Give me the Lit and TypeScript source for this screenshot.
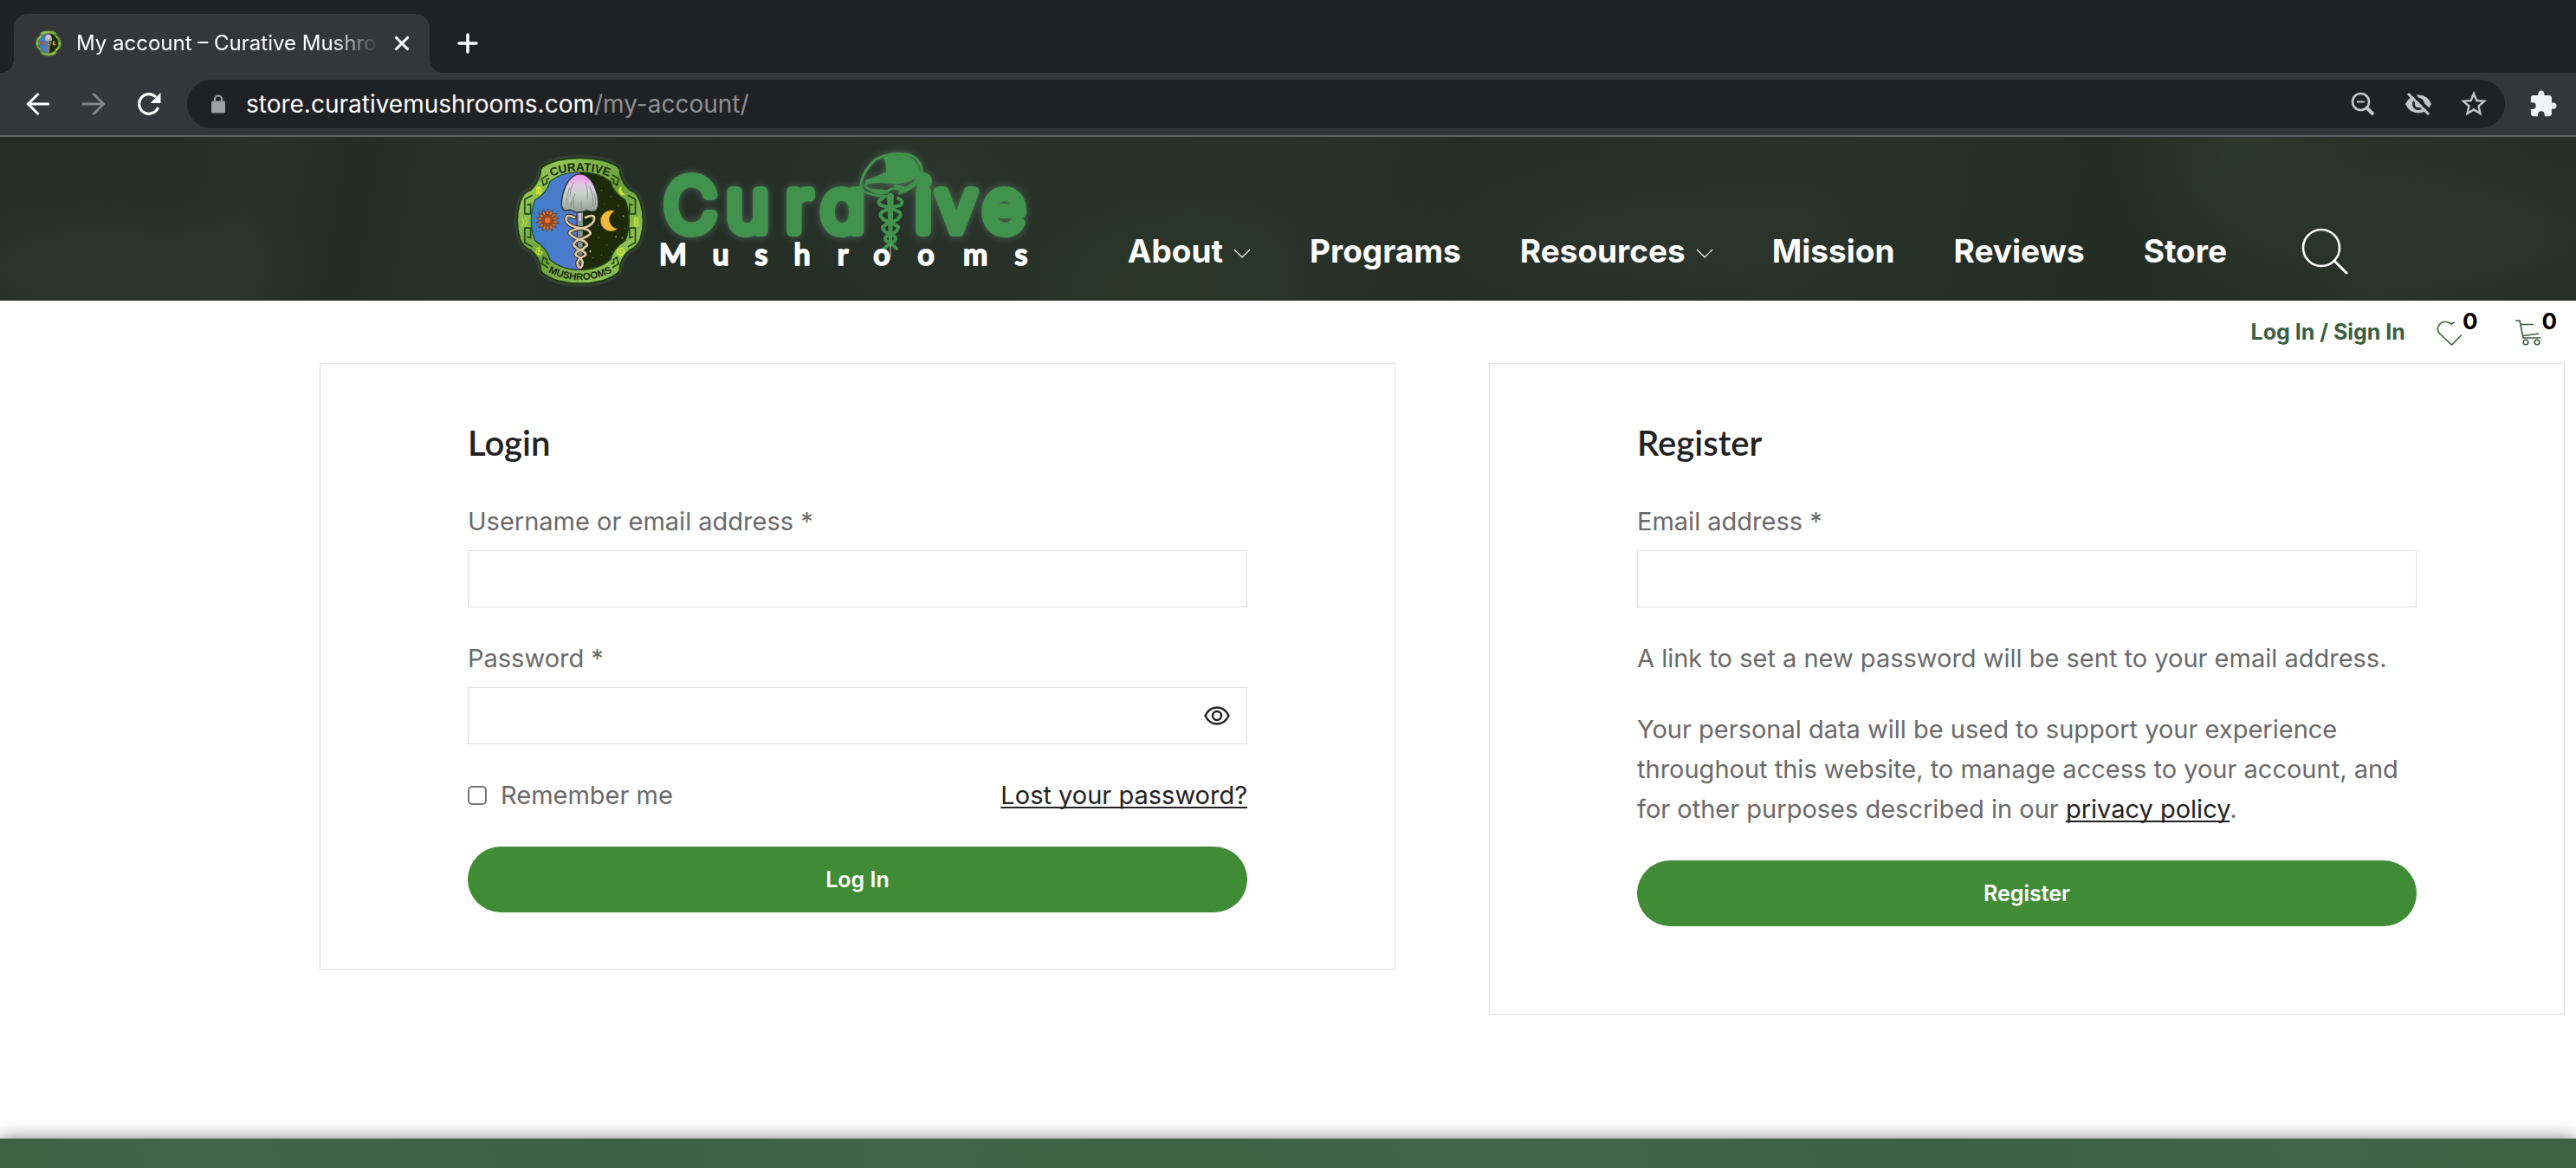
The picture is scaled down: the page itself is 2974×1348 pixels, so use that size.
import { LitElement, html, css, svg } from "lit";
import { customElement, property, state } from "lit/decorators.js";

interface NavItem {
  label: string;
  menu?: boolean;
}

const NAV: NavItem[] = [
  { label: "About", menu: true },
  { label: "Programs" },
  { label: "Resources", menu: true },
  { label: "Mission" },
  { label: "Reviews" },
  { label: "Store" },
];

/* Round seal: day half, night half, mushroom staff in the middle. */
@customElement("brand-seal")
export class BrandSeal extends LitElement {
  @property({ type: Boolean }) lettered = false;

  static styles = css`
    :host { display: block; }
    .seal { display: block; width: 100%; height: 100%; overflow: visible; }
    .glow { filter: drop-shadow(0 0 6px rgba(190, 220, 190, 0.35)); }
    .ring-text { font: 700 40px "Liberation Sans", sans-serif; fill: #16290a; }
    .ring-text.long { font-size: 34px; }
  `;

  render() {
    const ring =
      "M190 77Q267 60 345 77Q385 88 402 105Q404 148 437 178Q463 184 474 222Q492 284 474 345Q463 375 437 384Q404 410 402 456Q385 474 345 488Q267 508 190 488Q150 474 133 456Q131 410 98 384Q72 375 61 345Q43 284 61 222Q72 184 98 178Q131 148 133 105Q150 88 190 77Z";
    const inner =
      "M267 118Q330 118 370 150Q380 190 421 214Q446 284 421 350Q380 375 370 415Q330 450 267 450Q205 450 165 415Q155 375 114 350Q89 284 114 214Q155 190 165 150Q205 118 267 118Z";
    const rays = Array.from({ length: 14 }, (_, i) => i * (360 / 14));
    const stars = [[303,152],[340,180],[372,200],[398,232],[415,268],[350,225],[330,340],[358,366],[390,338],[312,410],[340,400],[376,390],[302,388],[420,310],[385,160],[318,240],[412,342],[330,300]];
    return html`
      <svg class="seal" viewBox="46 62 444 444" role="img" aria-label="Curative Mushrooms seal">
        <defs>
          <linearGradient id="rim" x1="0" y1="0" x2="1" y2="1">
            <stop offset="0" stop-color="#7fb446" /><stop offset=".2" stop-color="#92c455" />
            <stop offset=".5" stop-color="#6a9f3c" /><stop offset=".8" stop-color="#90c254" />
            <stop offset="1" stop-color="#659c3b" />
          </linearGradient>
          <linearGradient id="day" x1="0" y1="0" x2="1" y2="0">
            <stop offset="0" stop-color="#3d7fc8" /><stop offset=".55" stop-color="#5478cf" />
            <stop offset="1" stop-color="#9a55e0" />
          </linearGradient>
          <linearGradient id="cap" x1="0" y1="0" x2="0" y2="1">
            <stop offset="0" stop-color="#f08df0" /><stop offset=".28" stop-color="#e3c6e4" />
            <stop offset=".5" stop-color="#c9d3cd" /><stop offset="1" stop-color="#8f9c94" />
          </linearGradient>
          <clipPath id="left"><rect x="40" y="60" width="227" height="450" /></clipPath>
          <path id="arc-top" d="M152 140Q267 86 383 140" />
          <path id="arc-bottom" d="M152 456Q267 516 383 456" />
        </defs>
        <path class="glow" d=${ring} fill="url(#rim)" stroke="#1d3a0e" stroke-width="6" />
        <path d=${inner} fill="#1d2b0b" stroke="#1b3a12" stroke-width="6" />
        <path d=${inner} fill="url(#day)" clip-path="url(#left)" />
        <g fill="none" stroke="#24480f" stroke-width="5">
          <path d="M158 126l-22 14 6 22 12-8 -2-10 10-6M377 126l22 14-6 22-12-8 2-10-10-6" />
          <path d="M158 444l-22-14 6-22 12 8-2 10 10 6M377 444l22-14-6-22-12 8 2 10-10 6" />
          <path d="M104 196l-26 14v50h20v-34l-12 4M430 196l26 14v50h-20v-34l12 4" />
          <path d="M104 372l-26-14v-50h20v34l-12-4M430 372l26-14v-50h-20v34l12-4" />
        </g>
        <g fill="none" stroke="#d8ee2c" stroke-width="4">
          <rect x="119" y="170" width="14" height="22" rx="6" /><path d="M126 172v18" />
          <circle cx="406" cy="389" r="12" /><path d="M394 389h24M406 377v24M398 380l16 18" stroke-width="2" />
          <path d="M116 377h16M126 372v30M114 390q12-12 24 2q-8 16-24-2" stroke-width="3" />
          <path d="M70 276q8 10 0 26M80 272q10 14 0 30" stroke-width="3" />
          <path d="M454 274h10v28h-10zM454 288h10" stroke-width="3" />
        </g>
        <path d="M410 166a15 15 0 1 0 12 27a18 18 0 0 1-12-27z" fill="#d8ee2c" />
        ${stars.map(([x, y], i) => svg`<circle cx=${x} cy=${y} r=${i % 4 ? 1.6 : 3} fill="#d7dfcf" opacity=${i % 3 ? 0.6 : 1} />`)}
        ${rays.map((a) => svg`<path d="M150 262Q148 250 158 243Q157 252 162 262Z" fill="#d07a33" stroke="#5a2a12" stroke-width="2" transform="rotate(${a} 156 282)" />`)}
        <circle cx="156" cy="282" r="20" fill="#9c4a24" /><circle cx="156" cy="282" r="9" fill="#f0703a" />
        <path d="M386 250A36 36 0 1 0 396 311A32 32 0 0 1 386 250Z" fill="#f0b83c" stroke="#6b4a10" stroke-width="2" />
        <path d="M258 118V450" stroke="#c24cf0" stroke-width="5" />
        <path d="M256 250h23l-3 165-9 32-8-32z" fill="#81988d" stroke="#1f2a22" stroke-width="3" />
        <path d="M262 256v28h9v-28z" fill="#d9b6d4" />
        <g fill="none" stroke-linecap="round">
          ${["#2d2416|13", "#decba6|8"].map((s) => {
            const [c, w] = s.split("|");
            return svg`<g stroke=${c} stroke-width=${w}>
              <path d="M248 272Q214 256 220 284Q230 304 268 308Q306 314 302 328Q290 340 268 346Q242 356 246 368Q256 380 270 384Q292 394 284 402Q262 412 258 426Q258 440 268 444" />
              <path d="M286 272Q322 256 314 284Q304 304 268 310Q226 316 232 328Q244 342 268 348Q294 356 290 368Q280 380 266 384Q246 394 254 402Q274 412 276 426Q276 436 270 442" />
            </g>`;
          })}
        </g>
        <path d="M268 124Q240 122 220 160Q202 200 204 232Q206 254 232 246Q262 262 290 248Q322 260 329 236Q332 200 314 160Q294 124 268 124Z" fill="url(#cap)" stroke="#28302b" stroke-width="4" />
        <path d="M232 170q-14 30-12 62M246 150q-12 20-14 50M250 190q-10 20-4 50M286 150q10 30 6 60M300 166q14 30 10 70M314 188q8 20 6 44M240 214q-6 10-4 24M272 215q-4 16 0 28" fill="none" stroke="#6f7b75" stroke-width="2" />
        ${this.lettered
          ? svg`<text class="ring-text" text-anchor="middle"><textPath href="#arc-top" startOffset="50%">CURATIVE</textPath></text>
                <text class="ring-text long" text-anchor="middle"><textPath href="#arc-bottom" startOffset="50%">MUSHROOMS</textPath></text>`
          : ""}
      </svg>
    `;
  }
}

/* Two-line brand lettering; a mushroom caduceus stands between the letters. */
@customElement("brand-wordmark")
export class BrandWordmark extends LitElement {
  static styles = css`
    :host { display: block; }
    .mark { display: block; width: 100%; height: 100%; overflow: visible; }
    .glow { filter: drop-shadow(0 0 4px rgba(140, 190, 150, 0.4)); }
    .big {
      font: 300 84px Inter, sans-serif; font-feature-settings: "cv11";
      fill: #41924c; stroke: #41924c; stroke-width: 12px; text-anchor: middle;
      stroke-linejoin: round; stroke-linecap: round;
    }
    .small {
      font: 600 34px Lato, sans-serif; fill: #fff; stroke: #fff; text-anchor: middle;
      stroke-width: 2px; stroke-linejoin: round;
    }
    .green { fill: #41924c; }
    .line { fill: none; stroke: #41924c; stroke-linecap: round; }
  `;

  render() {
    return html`
      <svg class="mark" viewBox="0 0 440 150" role="img" aria-label="Curative Mushrooms">
        <g class="glow">
          <text class="big" y="97" x="42 108 167 218">Cura</text>
          <text class="big" y="97" x="311 349 404">ive</text>
          <path class="line" stroke-width="3" d="M272 57Q240 56 239 44Q240 28 256 14Q276 4 296 9Q314 18 307 36Q300 48 283 53" />
          <path class="green" d="M244 38Q262 32 268 28Q268 14 264 12Q274 7 290 9Q308 16 307 30Q296 44 272 42Q254 40 244 44Z" />
          <path class="line" stroke-width="3" d="M243 44Q256 56 268 52Q276 44 286 50L302 40M250 49L270 51M278 44L292 48" />
        </g>
        <path class="green" d="M269 55Q273 50 277 55L275 108L273 117L271 108Z" />
        <g class="line" stroke-width="4">
          <path d="M264 59Q256 63 262 67Q274 70 282 74Q288 78 280 84Q268 88 264 92Q264 97 272 100Q282 103 278 108Q270 112 266 117" />
          <path d="M282 59Q290 63 284 67Q272 70 264 74Q258 78 266 84Q278 88 282 92Q282 97 274 100Q264 103 268 108Q276 112 280 117" />
        </g>
        <path d="M273 112V127" stroke="#9dc7a2" stroke-width="1" />
        <text class="small" y="136" x="22 77 124 171 218 263 314 371 424">Mushrooms</text>
      </svg>
    `;
  }
}

@customElement("browser-bar")
export class BrowserBar extends LitElement {
  static styles = css`
    :host { display: block; background: #202124; color: #fff; font-family: Inter, sans-serif; }
    button { border: 0; padding: 0; background: none; color: inherit; display: grid; place-items: center; }
    svg { display: block; }
    .tabs { display: flex; align-items: flex-end; height: 84px; padding-left: 16px; gap: 28px; }
    .tab {
      position: relative; display: flex; align-items: center; box-sizing: border-box;
      width: 480px; height: 68px; padding: 0 22px 0 25px; gap: 17px;
      background: #35363a; border-radius: 16px 16px 0 0;
    }
    .tab::before, .tab::after {
      content: ""; position: absolute; bottom: 0; width: 16px; height: 16px;
    }
    .tab::before { right: 100%; background: radial-gradient(circle at 0 0, transparent 16px, #35363a 16px); }
    .tab::after { left: 100%; background: radial-gradient(circle at 100% 0, transparent 16px, #35363a 16px); }
    .favicon { width: 30px; height: 30px; flex: none; }
    .title {
      flex: 1; min-width: 0; overflow: hidden; white-space: nowrap; font-size: 24px; line-height: 32px;
      mask-image: linear-gradient(to right, #000 84%, transparent);
    }
    .close { width: 20px; height: 20px; }
    .new { width: 32px; height: 68px; }
    .tools {
      display: flex; align-items: center; height: 72px; background: #35363a;
      border-bottom: 2px solid #5f6165; padding: 0 20px 0 26px; gap: 28px;
    }
    .nav-btn { width: 36px; height: 36px; }
    .dim { color: #85868a; }
    .omni {
      flex: 1; display: flex; align-items: center; box-sizing: border-box; height: 56px;
      padding: 0 18px 0 28px; margin: 0 -2px; border-radius: 28px; background: #202124; gap: 28px;
    }
    .url { flex: 1; font-size: 28px; line-height: 36px; color: #8e8f92; margin-left: -4px; }
    .host { color: #fff; }
    .lock { color: #9aa0a6; }
    .omni button { color: #c4c5c7; width: 36px; height: 36px; }
  `;

  render() {
    return html`
      <div class="tabs">
        <div class="tab">
          <brand-seal class="favicon"></brand-seal>
          <span class="title">My account – Curative Mushrooms</span>
          <button class="close" aria-label="Close tab">
            <svg width="18" height="18" viewBox="0 0 18 18" stroke="currentColor" stroke-width="3"><path d="M1.5 1.5l15 15M16.500 1.5l-15 15" /></svg>
          </button>
        </div>
        <button class="new" aria-label="New tab">
          <svg width="24" height="24" viewBox="0 0 24 24" stroke="currentColor" stroke-width="3.500" stroke-linecap="round"><path d="M12 2v20M2 12h20" /></svg>
        </button>
      </div>
      <div class="tools">
        <button class="nav-btn" aria-label="Back">
          <svg width="28" height="28" viewBox="0 0 28 28" fill="none" stroke="currentColor" stroke-width="3"><path d="M27 14H3M14.500 2L2.500 14l12 12" /></svg>
        </button>
        <button class="nav-btn dim" aria-label="Forward">
          <svg width="28" height="28" viewBox="0 0 28 28" fill="none" stroke="currentColor" stroke-width="3"><path d="M1 14h24M13.500 2l12 12-12 12" /></svg>
        </button>
        <button class="nav-btn" aria-label="Reload">
          <svg width="28" height="28" viewBox="0 0 28 28" fill="none" stroke="currentColor" stroke-width="3.200"><path d="M24.500 18A11.300 11.300 0 1 1 22 6" /><path d="M27.500 1v12H15.500z" fill="currentColor" stroke="none" /></svg>
        </button>
        <div class="omni">
          <svg class="lock" width="16" height="22" viewBox="0 0 16 22"><rect y="7.500" width="16" height="14" rx="2" fill="currentColor" /><path d="M4 9V5.500a4 4 0 0 1 8 0V9" fill="none" stroke="currentColor" stroke-width="2.200" /></svg>
          <span class="url"><span class="host">store.curativemushrooms.com</span>/my-account/</span>
          <button aria-label="Zoom">
            <svg width="28" height="28" viewBox="0 0 28 28" fill="none" stroke="currentColor"><circle cx="11.500" cy="11.500" r="9.500" stroke-width="2.600" /><path d="M18 18l8 8" stroke-width="4" /><path d="M7 11.500h9" stroke-width="2" /></svg>
          </button>
          <button aria-label="Third-party cookies blocked">
            <svg width="32" height="32" viewBox="0 0 32 32"><path d="M1 16Q6 5.500 16 5.500T31 16Q26 26.500 16 26.500T1 16Z" fill="currentColor" /><circle cx="16" cy="16" r="7" fill="#202124" /><circle cx="16" cy="16" r="4.200" fill="currentColor" /><path d="M6 1l25 25" stroke="#202124" stroke-width="4" /><path d="M4 4l24 24" stroke="currentColor" stroke-width="3" /></svg>
          </button>
          <button aria-label="Bookmark">
            <svg width="36" height="36" viewBox="0 0 24 24" fill="currentColor"><path d="M22 9.240l-7.190-.62L12 2 9.190 8.630 2 9.240l5.460 4.730L5.820 21 12 17.270 18.180 21l-1.630-7.030L22 9.240zM12 15.400l-3.760 2.270 1-4.280-3.320-2.880 4.380-.38L12 6.100l1.710 4.040 4.380.38-3.320 2.880 1 4.280L12 15.400z" /></svg>
          </button>
        </div>
        <button class="nav-btn" aria-label="Extensions">
          <svg width="34" height="34" viewBox="0 0 24 24" fill="#f1f3f4"><path d="M20.500 11H19V7c0-1.100-.9-2-2-2h-4V3.500C13 2.120 11.880 1 10.500 1S8 2.120 8 3.500V5H4c-1.100 0-1.990.9-1.990 2v3.800H3.500c1.490 0 2.700 1.210 2.700 2.700s-1.210 2.700-2.700 2.700H2V20c0 1.100.9 2 2 2h3.800v-1.500c0-1.490 1.210-2.700 2.700-2.700s2.700 1.210 2.700 2.700V22H17c1.100 0 2-.9 2-2v-4h1.500c1.380 0 2.500-1.120 2.500-2.500S21.880 11 20.500 11z" /></svg>
        </button>
      </div>
    `;
  }
}

@customElement("site-header")
export class SiteHeader extends LitElement {
  static styles = css`
    :host { display: block; font-family: Inter, sans-serif; }
    a { text-decoration: none; }
    svg { display: block; }
    .banner {
      display: flex; box-sizing: border-box; height: 189px; padding-left: 20%;
      background-color: #252f27;
      background-image:
        radial-gradient(ellipse 260px 90px at 4% 80%, rgba(62, 76, 60, 0.3), transparent),
        radial-gradient(ellipse 180px 120px at 36% 30%, rgba(48, 60, 50, 0.4), transparent),
        radial-gradient(ellipse 200px 120px at 45% 90%, rgba(48, 62, 40, 0.5), transparent),
        radial-gradient(ellipse 320px 90px at 63% 60%, rgba(52, 64, 56, 0.3), transparent),
        radial-gradient(ellipse 160px 160px at 87% 10%, rgba(54, 66, 56, 0.4), transparent),
        radial-gradient(ellipse 300px 100px at 96% 60%, rgba(52, 62, 46, 0.4), transparent),
        linear-gradient(100deg, #252e26 0 7%, #29322a 10%, #242d25 14%, #28312a 18%, #242d26 24%, #28322a 50%, #242d26 56%, #28322a 70%, #232d25 82%, #29322a 92%, #252e26);
    }
    .brand { display: flex; flex: none; align-items: flex-start; gap: 10px; padding-top: 12px; }
    .seal { width: 150px; height: 150px; padding-top: 10px; }
    .wordmark { width: 440px; height: 150px; }
    .nav { display: flex; align-items: center; gap: 68px; padding: 102px 0 0 107px; height: 60px; }
    .item { display: flex; align-items: center; gap: 12px; color: #fff; font-size: 37px; font-weight: 700; line-height: 48px; }
    .item svg { padding-top: 6px; }
    .search { border: 0; padding: 0; margin-left: 18px; background: none; color: #fff; }
    .account { display: flex; align-items: center; justify-content: flex-end; height: 72px; padding-right: 22px; gap: 36px; }
    .login { color: #3a5f41; font-size: 25px; font-weight: 700; line-height: 36px; }
    .counters { display: flex; gap: 44px; padding-bottom: 6px; }
    .counter { display: flex; align-items: flex-start; color: #3a5f41; }
    .counter svg { padding-top: 8px; }
    .count { color: #000; font-size: 26px; font-weight: 700; line-height: 20px; }
  `;

  render() {
    return html`
      <header class="banner">
        <a class="brand" href="#" aria-label="Curative Mushrooms home">
          <brand-seal class="seal" lettered></brand-seal>
          <brand-wordmark class="wordmark"></brand-wordmark>
        </a>
        <nav class="nav">
          ${NAV.map(
            (n) => html`<a class="item" href="#">${n.label}${n.menu
              ? html`<svg width="20" height="12" viewBox="0 0 20 12" fill="none" stroke="#fff" stroke-width="1.200"><path d="M1 1l9 9 9-9" /></svg>`
              : ""}</a>`
          )}
          <button class="search" aria-label="Search">
            <svg width="54" height="54" viewBox="0 0 54 54" fill="none" stroke="currentColor" stroke-width="2.600"><circle cx="23" cy="23" r="21" /><path d="M38 38l14 14" stroke-linecap="round" stroke-width="3" /></svg>
          </button>
        </nav>
      </header>
      <div class="account">
        <a class="login" href="#">Log In / Sign In</a>
        <div class="counters">
          <a class="counter" href="#" aria-label="Wishlist">
            <svg width="30" height="30" viewBox="0 0 30 30" fill="none" stroke="currentColor" stroke-width="1.600"><path d="M20.500 2.500L17.500 5Q10 0 5 4Q-1.500 10 3.500 16L17.500 29L29 17.500" /></svg>
            <span class="count">0</span>
          </a>
          <a class="counter" href="#" aria-label="Cart">
            <svg width="30" height="30" viewBox="0 0 30 30" fill="none" stroke="currentColor" stroke-width="1.600"><path d="M0 1h5l4 20h20M6 5.500h15M9 18.500l18-2.500" /><circle cx="12" cy="26" r="2.800" /><circle cx="25" cy="26" r="2.800" /></svg>
            <span class="count">0</span>
          </a>
        </div>
      </div>
    `;
  }
}

@customElement("account-forms")
export class AccountForms extends LitElement {
  @state() private reveal = false;

  static styles = css`
    :host { display: block; font-family: Inter, sans-serif; color: #6a6a6a; }
    .columns {
      display: grid; grid-template-columns: 1fr 1fr; align-items: start;
      gap: 108px; padding: 0 13px 143px 369px;
    }
    .card { box-sizing: border-box; border: 1px solid #dedede; padding: 65px 170px; }
    .card.tall { padding-bottom: 101px; }
    .heading { margin: 0 0 42px; color: #222; font: 600 40px/52px Lato, sans-serif; }
    .form { display: flex; flex-direction: column; gap: 36px; font-size: 29px; line-height: 46px; font-weight: 400; }
    .field { display: flex; flex-direction: column; gap: 10px; }
    .box { display: flex; align-items: center; box-sizing: border-box; height: 66px; border: 1px solid #dedede; }
    .input { flex: 1; min-width: 0; height: 100%; box-sizing: border-box; border: 0; outline: 0; padding: 0 20px; background: none; font: inherit; color: #222; }
    .eye { border: 0; padding: 0 19px; background: none; color: #222; }
    .eye svg { display: block; }
    .row { display: flex; justify-content: space-between; }
    .remember { display: flex; align-items: center; gap: 16px; }
    .tick { appearance: none; width: 22px; height: 22px; margin: 0; border: 2px solid #767676; border-radius: 5px; background: #fff; }
    .tick:checked { background: #408c36; }
    .link { color: #222; text-decoration: underline; text-decoration-thickness: 2px; text-underline-offset: 3px; text-decoration-skip-ink: none; }
    .note { margin: 0; }
    .submit { height: 76px; border: 0; border-radius: 38px; background: #408c36; color: #fff; font: 600 25px/36px Inter, sans-serif; }
  `;

  render() {
    return html`
      <main class="columns">
        <section class="card">
          <h2 class="heading">Login</h2>
          <form class="form" @submit=${(e: Event) => e.preventDefault()}>
            <div class="field">
              <label for="username">Username or email address *</label>
              <div class="box"><input class="input" id="username" type="text" autocomplete="username" /></div>
            </div>
            <div class="field">
              <label for="password">Password *</label>
              <div class="box">
                <input class="input" id="password" type=${this.reveal ? "text" : "password"} />
                <button class="eye" type="button" aria-label="Show password" @click=${() => (this.reveal = !this.reveal)}>
                  <svg width="30" height="22" viewBox="0 0 30 22" fill="none" stroke="currentColor" stroke-width="2.400"><path d="M1.500 11Q6 1.500 15 1.500T28.500 11Q24 20.500 15 20.500T1.500 11Z" /><circle cx="15" cy="11" r="5" /></svg>
                </button>
              </div>
            </div>
            <div class="row">
              <label class="remember" for="remember"><input class="tick" id="remember" type="checkbox" />Remember me</label>
              <a class="link" href="#">Lost your password?</a>
            </div>
            <button class="submit" type="submit">Log In</button>
          </form>
        </section>
        <section class="card tall">
          <h2 class="heading">Register</h2>
          <form class="form" @submit=${(e: Event) => e.preventDefault()}>
            <div class="field">
              <label for="email">Email address *</label>
              <div class="box"><input class="input" id="email" type="email" /></div>
            </div>
            <p class="note">A link to set a new password will be sent to your email address.</p>
            <p class="note">
              Your personal data will be used to support your experience throughout this website, to
              manage access to your account, and for other purposes described in our
              <a class="link" href="#">privacy policy</a>.
            </p>
            <button class="submit" type="submit">Register</button>
          </form>
        </section>
      </main>
    `;
  }
}

@customElement("app-root")
export class AppRoot extends LitElement {
  static styles = css`
    :host { display: flex; flex-direction: column; min-height: 100vh; background: #fff; overflow: hidden; }
    .footer {
      flex: 1; min-height: 34px; box-shadow: 0 0 20px rgba(0, 0, 0, 0.5);
      background: linear-gradient(90deg, #3e6244, #40664a 8%, #3d6044 24%, #436448 35%, #3f6245 45%, #42664a 60%, #3d6044 75%, #416548 90%, #3e6244);
    }
  `;

  render() {
    return html`
      <browser-bar></browser-bar>
      <site-header></site-header>
      <account-forms></account-forms>
      <footer class="footer"></footer>
    `;
  }
}
